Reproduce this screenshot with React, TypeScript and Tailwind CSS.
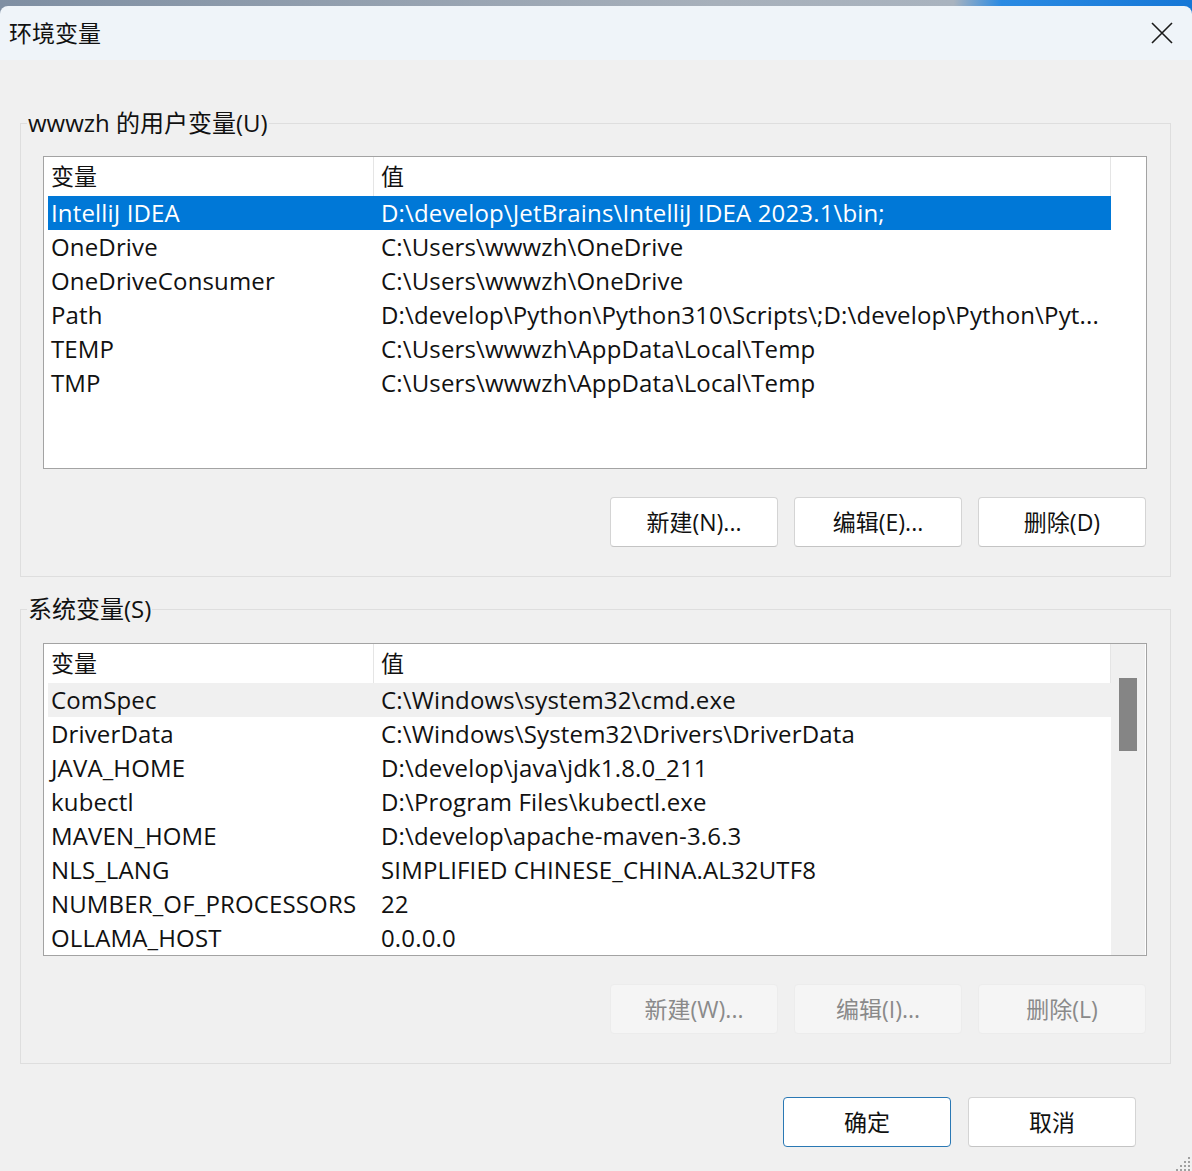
const userVars = [
  { name: "IntelliJ IDEA", value: "D:\\develop\\JetBrains\\IntelliJ IDEA 2023.1\\bin;" },
  { name: "OneDrive", value: "C:\\Users\\wwwzh\\OneDrive" },
  { name: "OneDriveConsumer", value: "C:\\Users\\wwwzh\\OneDrive" },
  { name: "Path", value: "D:\\develop\\Python\\Python310\\Scripts\\;D:\\develop\\Python\\Pyt..." },
  { name: "TEMP", value: "C:\\Users\\wwwzh\\AppData\\Local\\Temp" },
  { name: "TMP", value: "C:\\Users\\wwwzh\\AppData\\Local\\Temp" },
];

const sysVars = [
  { name: "ComSpec", value: "C:\\Windows\\system32\\cmd.exe" },
  { name: "DriverData", value: "C:\\Windows\\System32\\Drivers\\DriverData" },
  { name: "JAVA_HOME", value: "D:\\develop\\java\\jdk1.8.0_211" },
  { name: "kubectl", value: "D:\\Program Files\\kubectl.exe" },
  { name: "MAVEN_HOME", value: "D:\\develop\\apache-maven-3.6.3" },
  { name: "NLS_LANG", value: "SIMPLIFIED CHINESE_CHINA.AL32UTF8" },
  { name: "NUMBER_OF_PROCESSORS", value: "22" },
  { name: "OLLAMA_HOST", value: "0.0.0.0" },
];

interface Row {
  name: string;
  value: string;
}

function ListHeader() {
  return (
    <div className="flex h-[39px] w-[1063px] items-center">
      <div className="w-[325px] pl-[3px]">变量</div>
      <div className="h-full w-px bg-[#e5e5e5]" />
      <div className="w-[736px] pl-[7px]">值</div>
      <div className="h-full w-px bg-[#e5e5e5]" />
    </div>
  );
}

function VarList({ rows, selected, hover, scroll }: { rows: Row[]; selected?: number; hover?: number; scroll?: boolean }) {
  return (
    <div className="flex h-[313px] overflow-hidden border border-[#a3a3a3] bg-white pl-[4px]">
      <div className="flex w-[1063px] flex-col">
        <ListHeader />
        {rows.map((r, i) => (
          <div
            key={r.name}
            className={`flex h-[34px] shrink-0 items-center whitespace-nowrap text-[24px] tracking-[0.15px] ${
              i === selected ? "bg-[#0078d7] text-white" : i === hover ? "bg-[#f0f0f0]" : ""
            }`}
          >
            <div className="w-[326px] overflow-hidden pl-[3px]">{r.name}</div>
            <div className="flex-1 overflow-hidden pl-[7px]">{r.value}</div>
          </div>
        ))}
      </div>
      {scroll && (
        <div className="h-full w-[34px] bg-[#f0f0f0] pl-[8px] pt-[34px]">
          <div className="h-[73px] w-[18px] bg-[#858585]" />
        </div>
      )}
    </div>
  );
}

function Btn({ label, disabled, primary }: { label: string; disabled?: boolean; primary?: boolean }) {
  return (
    <div
      className={`flex h-[50px] w-[168px] items-center justify-center rounded-[4px] border ${
        disabled
          ? "border-[#ececec] bg-[#f5f5f5] text-[#8a8a8a]"
          : primary
            ? "border-[#2a78b4] bg-white"
            : "border-[#d4d4d4] border-b-[#c4c4c4] bg-white"
      }`}
    >
      {label}
    </div>
  );
}

function Group({ title, rows, selected, hover, scroll, buttons, disabled, listTop }: {
  title: string;
  rows: Row[];
  selected?: number;
  hover?: number;
  scroll?: boolean;
  buttons: string[];
  disabled?: boolean;
  listTop: string;
}) {
  return (
    <fieldset className="ml-[20px] w-[1151px] border border-[#dedede]">
      <legend className="ml-[6px] h-[32px] px-px text-[24px] leading-[32px]">{title}</legend>
      <div className={`pb-[29px] pl-[22px] pr-[23px] ${listTop}`}>
        <VarList rows={rows} selected={selected} hover={hover} scroll={scroll} />
        <div className="mt-[28px] flex justify-end gap-[16px] pr-px">
          {buttons.map((b) => (
            <Btn key={b} label={b} disabled={disabled} />
          ))}
        </div>
      </div>
    </fieldset>
  );
}

export default function App() {
  return (
    <div className="relative h-[1171px] w-[1192px] overflow-hidden bg-[#f0f0f0] font-['Open_Sans','Noto_Sans_CJK_SC',sans-serif] text-[23px] text-[#111]">
      <div className="bg-[linear-gradient(90deg,#7f8fa3_0%,#a7b0bb_60%,#a9b3bf_80%,#2a8ae3_84%,#1677d6_100%)] pt-[6px]">
        <div className="flex h-[54px] items-center justify-between rounded-t-[8px] bg-[#eff4f9] pl-[9px] pr-[19px]">
          <span>环境变量</span>
          <svg width="22" height="22" viewBox="0 0 22 22" fill="none" stroke="#1a1a1a" strokeWidth="1.6">
            <path d="M1 1 L21 21 M21 1 L1 21" />
          </svg>
        </div>
      </div>

      <div className="pt-[47px]">
        <Group
          title="wwwzh 的用户变量(U)"
          rows={userVars}
          selected={0}
          buttons={["新建(N)...", "编辑(E)...", "删除(D)"]}
          listTop="pt-[17px]"
        />
        <div className="h-[16px]" />
        <Group
          title="系统变量(S)"
          rows={sysVars}
          hover={0}
          scroll
          disabled
          buttons={["新建(W)...", "编辑(I)...", "删除(L)"]}
          listTop="pt-[18px]"
        />
        <div className="mt-[33px] flex justify-end gap-[17px] pr-[56px]">
          <Btn label="确定" primary />
          <Btn label="取消" />
        </div>
      </div>

      <svg className="absolute bottom-0 right-0" width="16" height="16" viewBox="0 0 16 16" fill="#a0a0a0">
        <rect x="12" y="2" width="2" height="2" />
        <rect x="8" y="6" width="2" height="2" />
        <rect x="12" y="6" width="2" height="2" />
        <rect x="4" y="10" width="2" height="2" />
        <rect x="8" y="10" width="2" height="2" />
        <rect x="12" y="10" width="2" height="2" />
        <rect x="0" y="14" width="2" height="2" />
        <rect x="4" y="14" width="2" height="2" />
        <rect x="8" y="14" width="2" height="2" />
        <rect x="12" y="14" width="2" height="2" />
      </svg>
    </div>
  );
}
